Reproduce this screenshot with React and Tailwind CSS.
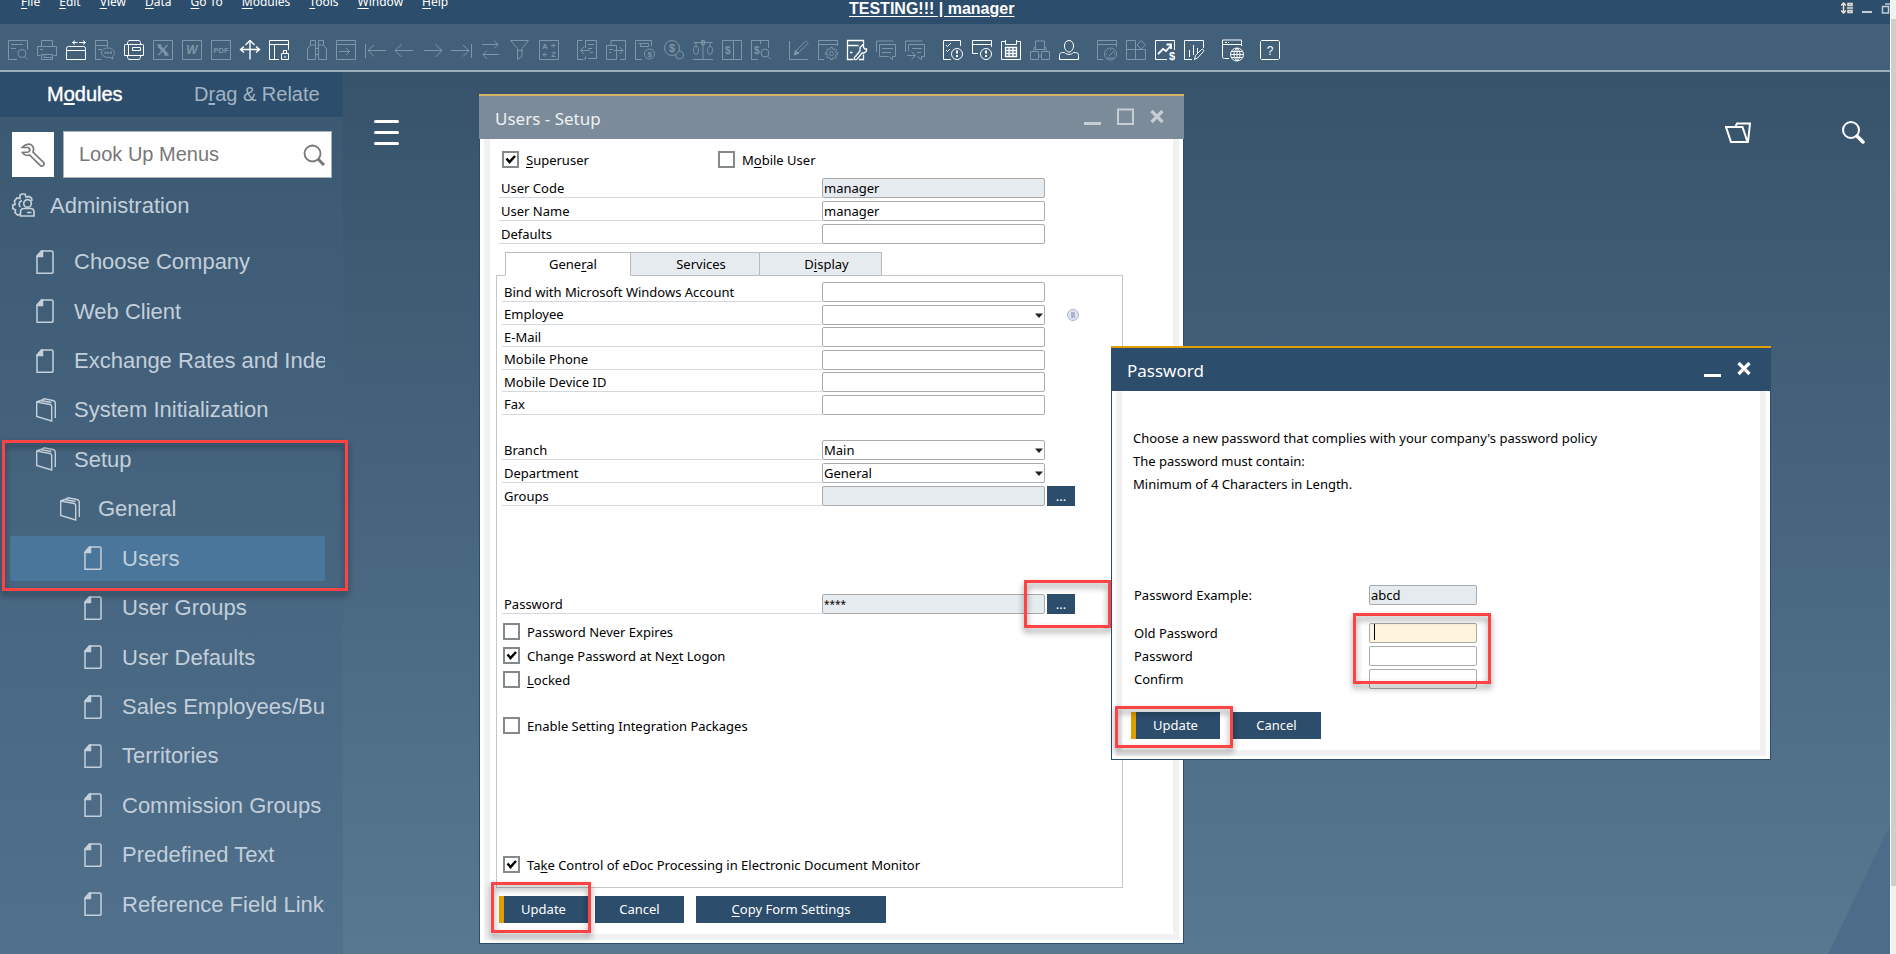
import React, { useState } from 'react'

const menus = ['_File', '_Edit', '_View', '_Data', '_Go To', '_Modules', '_Tools', '_Window', '_Help']

const tree = [
  { name: 'Choose Company', level: 1 },
  { name: 'Web Client', level: 1 },
  { name: 'Exchange Rates and Indexes', level: 1 },
  { name: 'System Initialization', level: 1, folder: true },
  { name: 'Setup', level: 1, folder: true },
  { name: 'General', level: 2, folder: true },
  { name: 'Users', level: 3 },
  { name: 'User Groups', level: 3 },
  { name: 'User Defaults', level: 3 },
  { name: 'Sales Employees/Buyers', level: 3 },
  { name: 'Territories', level: 3 },
  { name: 'Commission Groups', level: 3 },
  { name: 'Predefined Text', level: 3 },
  { name: 'Reference Field Links', level: 3 },
]

const indent = { 1: 'pl-[26px]', 2: 'pl-[50px]', 3: 'pl-[74px]' }

// the letter after "_" is the shortcut key and gets underlined
const Mnemonic = ({ text }) => {
  const i = text.indexOf('_')
  if (i < 0) return <span>{text}</span>
  return (
    <span>{text.slice(0, i)}<u className="underline-offset-2">{text[i + 1]}</u>{text.slice(i + 2)}</span>
  )
}

const letter = { stroke: 'none', fill: 'currentColor', fontFamily: 'Liberation Sans, sans-serif', fontWeight: 'bold' }

/* toolbar icons, 20x20 */
const I = {
  preview: <path d="M9 19.500H.5V.5h19v9M3 4.500h12M3 8.500h5M16.500 16.500l3 3M18 13.500a4 4 0 1 1-8 0a4 4 0 0 1 8 0" />,
  print: <path d="M4.500 6V.5h11V6M3.500 15.500H.5V6.500h19v9h-3M4.500 19.500v-5h11v5zM3 9.500h3M7 14.500v3h8" />,
  resize: <path d="M.5 8.500a2 2 0 0 1 2-2h15a2 2 0 0 1 2 2v11H.5zM.5 10.500h19M6.500 2.500h5M9 .5l-2.500 2L9 4.500M13 2.500h6M17 .5l2.500 2l-2.500 2" />,
  sms: <><path d="M12.500 7V.5H.5v19h6M.5 5.500h12M3 9.500h4" /><path d="M13 8c3.600 0 6.500 2 6.500 4.800c0 1.500-.8 2.700-2 3.500l.5 2.700l-3-1.700c-4.700.6-8.500-1.500-8.500-4.500C6.500 10 9.400 8 13 8z" /><path d="M9.500 12.800h2M12.200 12.800h2M15 12.800h2" strokeWidth="2" /></>,
  fax: <path d="M3.500 4C3.500 1.500 4 .5 6 .5h8c2 0 2.500 1 2.500 3.500M3.500 16c0 2.500.5 3.500 2.500 3.500h8c2 0 2.500-1 2.500-3.500M1.500 4.500h17c1 0 1 0 1 1v10h-19v-10c0-1 0-1 1-1zM4.500 4.500v11M8.500 7.500h8v3h-8z" />,
  excel: <><path d="M.5.5h19v19H.5z" /><path d="M5.500 5.500L14 14.500" strokeWidth="3" /><path d="M14.500 5L5.500 15M4.500 5h4M11.500 15h4" strokeWidth="1.300" /></>,
  word: <><path d="M.5.5h19v19H.5z" /><text x="10" y="14" fontSize="12" textAnchor="middle" fontStyle="italic" style={letter}>W</text></>,
  pdf: <><path d="M.5.5h19v19H.5z" /><text x="10" y="12.500" fontSize="7.500" textAnchor="middle" style={letter}>PDF</text></>,
  move: <path d="M10 1v18.500M1 9.500h18M10 .5L5.500 5M10 .5L14.500 5M4 6.500l-3.500 3l3.500 3M16 6.500l3.500 3l-3.500 3" strokeWidth="1.400" />,
  lock: <path d="M10 19.500H.5V.5h19V10M.5 4.500h19M5.500 4.500v15M12.500 13.500h7v6h-7zM14.500 13v-2.500h3V13M16 16v2" />,
  find: <path d="M3.500 5V.5h5V5M11.500 5V.5h5V5M.5 19.500V9l3-4h5v14.500zM19.500 19.500V9l-3-4h-5v14.500zM8.500 8.500h3M8.500 14.500h3" />,
  add: <path d="M.5.5h19v19H.5zM.5 4.500h19M3 11.500h10M10 8l3.500 3.500L10 15" />,
  first: <path d="M.5 4v14M3 10.500h18M9 5l-6 5.500l6 6" />,
  prev: <path d="M1 10.500h18M7.500 4.500l-6.500 6l6.500 6.500" />,
  next: <path d="M1 10.500h18M12.500 4.500l6.500 6l-6.500 6.500" />,
  last: <path d="M19.500 4v14M-1 10.500h18M11 5l6 5.500l-6 6" />,
  refresh: <path d="M1 4.500h16M13 .5l4 4l-4 4M18 14.500H2M6 10.500l-4 4l4 4.500" />,
  filter: <path d="M.5.5h18L12 8.500v8l-4.500 3v-11zM8 10.500h4" />,
  sort: <><path d="M.5.500h19v19H.5zM12 5.500h4M14 3.500l2 2l-2 2M8 14.500H4M6 12.500l-2 2l2 2" /><text x="3" y="8.500" fontSize="8" style={letter}>A</text><text x="12" y="17" fontSize="8" style={letter}>Z</text></>,
  base: <path d="M6 19.500H.5V.5h5M8.500 16.500V19h-2M8.500 8V.5h11v18h-8M11 4.500h6M11 8.500h4M4 10.500h9M7 7l-3.500 3.500L7 14M13 12.500h3" />,
  target: <path d="M5 5V.5h14.500v19H14M.5 5.500h10v14H.5zM3 9.500h4M3 12.500h2M8 10.500h9M13.500 7l3.500 3.500l-3.500 3.500" />,
  gross: <><path d="M7 19.500H.5V.5h16V6M3.500 3.500h10v3h-8v-3M19.500 14a5 5 0 1 1-10 0a5 5 0 0 1 10 0" /><text x="12.500" y="17" fontSize="8" style={letter}>$</text></>,
  pay: <><path d="M15.500 8a7.500 7.500 0 1 1-15 0a7.500 7.500 0 0 1 15 0M19.500 15a4 4 0 1 1-8 0M15 11c3 0 4.500 2 4.500 4" /><text x="5" y="12" fontSize="11" style={letter}>$</text></>,
  scale: <path d="M10 1v18M.5 2.500h19M0 19.500h20M3 2.500v4M17 2.500v4M.5 9.500c0-2 1-3 2.500-3s2.500 1 2.500 3c0 3-1 5-2.500 5s-2.500-2-2.500-5M14.500 9.500c0-2 1-3 2.500-3s2.500 1 2.500 3c0 3-1 5-2.500 5s-2.500-2-2.500-5M8.500.5h3v4h-3z" />,
  journal: <><path d="M.5.5h19v19H.5zM11.500.5v19" /><text x="3" y="14" fontSize="10" style={letter}>$</text></>,
  audit: <><path d="M7 19.500H.5V.5h17V8M9.500.5V4M18 13a4 4 0 1 1-8 0a4 4 0 0 1 8 0M17 16.500l3 3" /><text x="3" y="14" fontSize="10" style={letter}>$</text></>,
  edit: <><path d="M.5 1v18.500H19M7 11l9-9.500c1-1 4 1 2.500 2.500l-10 9.500" /><path d="M5 15l1.500-4.500l3 3z" fill="currentColor" /></>,
  gear: <path d="M6 19.500H.5V.5h19V6M.5 4.500h19M15.500 13.500a2 2 0 1 1-4 0a2 2 0 0 1 4 0M12.500 9V7.500h2V9l1.500.7l1.200-1l1.300 1.300l-1 1.300l.6 1.400h1.400v2h-1.500l-.6 1.300l1 1.200l-1.400 1.300l-1.200-1l-1.300.6v1.400h-2v-1.500l-1.300-.6l-1.200 1l-1.300-1.400l1-1.200l-.6-1.300H7.500v-2H9l.6-1.300l-1-1.300L10 8.700l1.200 1z" />,
  tool: <path d="M6.500 19.500H.5V.5h16V3M.5 5.500h11M3 12.500h2.500M8.500 16.500L13 11V7.500L16.500 4v3.500l1.500 1.500h1.500v2L17 13h-2l-4.500 5.500c-.5 1-2.500 1.500-3 .5c-.5-1 0-2 1-2.500zM16.500 14.500v5H12" strokeWidth="1.300" />,
  chat: <path d="M1 11.500H.5V1h17M3.500 4.500h16v12h-3v3l-4-3h-9zM6 8.500h11M6 12.500h9" />,
  chat2: <path d="M.5 12V1h17M3.500 11V4.500h16v12h-3v3l-4-3M7 8.500h10M12 12.500h4M2 15.500h8M6.500 11.500l4 4l-4 4" />,
  tasks: <><path d="M8 19.500H.5V.5h17V6M3 5l1.500 1.500L8 3M3 10l1.500 1.500L7 9M19.500 14a5.500 5.500 0 1 1-11 0a5.500 5.500 0 0 1 11 0" /><path d="M14 10.500v3M14 15v2" strokeWidth="2" /></>,
  alert: <><path d="M6 13.500H.5V.5h19V7M.5 4.500h19M19.500 14a5.500 5.500 0 1 1-11 0a5.500 5.500 0 0 1 11 0" /><path d="M14 10.500v3M14 15v2" strokeWidth="2" /></>,
  calendar: <><path d="M.5 1.500h4v3h11v-3h4v18H.5zM4.500 0v4M15.500 0v4" /><path d="M4.500 7.500h11v9h-11zM4.500 10.500h11M4.500 13.500h11M8 7.500v9M12 7.500v9" strokeWidth="1.300" /></>,
  org: <path d="M5.500 1h9v8.500h-9zM.5 11.500h8v8h-8zM11.500 11.500h8v8h-8zM8.500 16h3M4 7.500h1.500M14.500 7.500H16M4 7.500v4M16 7.500v4" />,
  person: <path d="M14.500 6c0 3-2 6-4.500 6S5.500 9 5.500 6S7 .5 10 .5s4.500 2.500 4.500 5.500M.5 19.500v-4c0-2 1-3 3-3h2c2 2.500 7 2.500 9 0h2c2 0 3 1 3 3v4z" />,
  gauge: <path d="M6 19.500H.5V.5h19V7M.5 4.500h19M19.500 14a6 6 0 1 1-12 0a6 6 0 0 1 12 0M12 16l5-5M9 14h1M13.500 9.500v1M17 14h1M10 18h7" />,
  widgets: <path d="M.5.5h9v19h-9zM.5 9.500h19v10h-10M9.500 9.500v10M15 .5l4.500 4.500l-4.500 4l-4-4z" />,
  profit: <><path d="M12 19.500H.5V.5h19V10" /><path d="M3 14l5-5l3 2l5-5.500M11.500 4.500H16v4.500" strokeWidth="1.800" /><text x="14" y="19.500" fontSize="11" style={letter}>$</text></>,
  chart: <path d="M8 19.500H.5V.5h19V8M5.500 10v7M9.500 5v10M13.500 8v5M10.500 19.500l1-4l6-6c1-1 3 .5 2 2l-6 6.500z" />,
  web: <path d="M7 18.500H2.500C1 18.500.5 18 .5 16.500V0h19v6M.5 4.500h19M3 2.500h2M6 2.500h1M21.500 14.500a6.500 6.500 0 1 1-13 0a6.500 6.500 0 0 1 13 0M15 8v13M8.500 14.500h13M9.500 11.500h11M9.500 17.500h11M15 8c-4 3-4 10 0 13M15 8c4 3 4 10 0 13" />,
  help: <><path d="M1.500.5h17l1 1v17l-1 1h-17l-1-1v-17z" /><text x="10" y="14.500" fontSize="12" textAnchor="middle" style={{ ...letter, fontWeight: 'normal' }}>?</text></>,
}

const on = ['resize', 'fax', 'move', 'lock', 'tool', 'tasks', 'alert', 'calendar', 'person', 'profit', 'chart', 'web', 'help']

const toolGroups = [
  ['preview', 'print', 'resize', 'sms', 'fax', 'excel', 'word', 'pdf', 'move', 'lock'],
  ['find', 'add', 'first', 'prev', 'next', 'last', 'refresh', 'filter', 'sort'],
  ['base', 'target', 'gross', 'pay', 'scale', 'journal', 'audit'],
  ['edit', 'gear', 'tool', 'chat', 'chat2'],
  ['tasks', 'alert', 'calendar', 'org', 'person'],
  ['gauge', 'widgets', 'profit', 'chart'],
  ['web'],
  ['help'],
]

const DocIcon = () => (
  <svg className="w-[18px] h-6 shrink-0" viewBox="0 0 18 24" fill="none" stroke="currentColor" strokeWidth="1.500">
    <path d="M5.500 1H16l1 1v20.500l-1 .7H1V6z" />
    <path d="M6.500 1v5.500H1L5.500 1z" fill="currentColor" />
  </svg>
)

const FolderIcon = () => (
  <svg className="w-5 h-6 shrink-0" viewBox="0 0 20 24" fill="none" stroke="currentColor" strokeWidth="1.400">
    <path d="M.7 4l13.500 2.500c1 .2 1.500 1 1.500 2V23L.7 18.500zM.7 4L4.500 2.500M5 2.500L8 .8l9 1.700c2 .4 2.300 1 2.300 3V20M4.500 2.500l11 2" />
  </svg>
)

const Header = () => (
  <header className="flex h-6 shrink-0 overflow-hidden bg-[#2c4d6b] text-white">
    <nav className="-mt-2 flex w-[849px] shrink-0 gap-[19px] pl-[21px] font-['Noto_Sans',sans-serif] text-[12px] leading-5">
      {menus.map((m) => (
        <button key={m} className="h-5"><Mnemonic text={m} /></button>
      ))}
    </nav>
    <h1 className="text-[16px] font-bold leading-[17px] underline underline-offset-2">TESTING!!! | manager</h1>
    <svg className="ml-auto mt-[2px] w-[49px] h-3 shrink-0" viewBox="0 0 49 12" fill="none" stroke="#c3cdd6" strokeWidth="1.500">
      <path d="M2.500 1v10M0 3.500L2.500 1L5 3.500M0 8.500L2.500 11L5 8.500M7 1.500h4v2H7zM6 6h6M7 8.500h4v2H7z" stroke="#e8e4d8" />
      <path d="M21 10h10" strokeWidth="2" />
      <path d="M41.500 4.500h6v6.500h-6zM44 2h6" />
    </svg>
  </header>
)

const Toolbar = () => (
  <div className="flex h-[48px] shrink-0 items-center gap-[18px] border-b-2 border-[#9aadbb] bg-[#42607a] pl-2 pt-[10px] pb-[4px]">
    {toolGroups.map((g, i) => (
      <div key={i} className="flex gap-[9px]">
        {g.map((name) => (
          <button key={name} aria-label={name} className={on.includes(name) ? 'text-white' : 'text-[#7f95a8]'}>
            <svg className="w-5 h-5 block overflow-visible" viewBox="0 0 20 20" fill="none" stroke="currentColor" strokeWidth="1">{I[name]}</svg>
          </button>
        ))}
      </div>
    ))}
  </div>
)

const Sidebar = () => (
  <aside className="w-[343px] shrink-0 bg-linear-to-b from-[#3b5871] to-[#50708c]">
    <div className="flex h-[45px] items-center bg-[#2c4d6b] pl-[47px] pb-[2px] text-[20px]">
      <button className="w-[147px] text-left text-white [-webkit-text-stroke:0.4px_white]"><Mnemonic text="M_odules" /></button>
      <button className="text-[#a3b3c3]"><Mnemonic text="D_rag & Relate" /></button>
    </div>
    <div className="flex items-center gap-[9px] pl-3 pr-[11px] pt-[14px]">
      <button aria-label="Settings" className="flex h-[45px] w-[42px] items-center justify-center bg-white">
        <svg className="w-6 h-6" viewBox="0 0 24 24" fill="none" stroke="#777" strokeWidth="1.700">
          <path d="M1 4.500C4 1 9 0 11.500 3c1.300 1.800 1.300 4 .5 6L23 20c.8 1.500-1.500 4-3 3L8.500 12C6 13 3 12 1.500 9.500l6-.5L9 7L7.500 4.500z" />
        </svg>
      </button>
      <label className="flex h-[47px] flex-1 items-center border border-[#a9b3bc] bg-white pl-[15px] pr-[6px]">
        <input aria-label="Look Up Menus" placeholder="Look Up Menus" className="w-0 flex-1 pb-[2px] text-[20px] outline-none placeholder:text-[#777]" />
        <svg className="w-[22px] h-[22px]" viewBox="0 0 22 22" fill="none" stroke="#777">
          <circle cx="9.500" cy="9.500" r="8" strokeWidth="1.800" />
          <path d="M15 15l6 6" strokeWidth="3" />
        </svg>
      </label>
    </div>
    <button className="mt-2 flex h-[38px] items-center gap-[15px] pl-3 text-[22px] text-[#c3cfda]">
      <svg className="w-[23px] h-6" viewBox="0 0 23 24" fill="none" stroke="currentColor" strokeWidth="1.700">
        <path d="M8 21.500l-2.500.5L3 19.500L3.500 17l-2.700-1.500v-3.500L3 11.500L2.500 8L5 5l3 .5V2l2-1h3l1 3l3-.5l2.500 1.500L20 8M8.500 14C6 12 7 8.500 10 7.500" />
        <circle cx="15.500" cy="10.500" r="3.800" />
        <path d="M8.500 23v-4c0-2 1.500-3.500 3.500-3.500h6.500c2 0 3.500 1.500 3.500 3.500v4zM15 19.500h4.500" />
      </svg>
      Administration
    </button>
    <ul className="ml-[10px] mr-[18px] mt-[13px] grid h-[692px] auto-rows-fr grid-cols-1 items-center text-[22px] text-[#c3cfda]">
      {tree.map((t) => (
        <li key={t.name}>
          <button className={`flex h-[45px] w-full items-center overflow-hidden whitespace-nowrap rounded-xs text-left ${indent[t.level]} ${t.name == 'Users' ? 'bg-[#4b769b]' : ''}`}>
            <span className="w-[38px] shrink-0">{t.folder ? <FolderIcon /> : <DocIcon />}</span>
            {t.name}
          </button>
        </li>
      ))}
    </ul>
  </aside>
)

const Check = ({ text, checked }) => {
  const [v, setv] = useState(!!checked)
  return (
    <label className="flex h-[17px] items-center gap-[7px]">
      <span className="relative h-[17px] w-[17px]">
        <input type="checkbox" checked={v} onChange={() => setv(!v)} className="peer block h-[17px] w-[17px] appearance-none border-2 border-[#84898c] bg-white" />
        <svg className="absolute left-[3px] top-[3px] hidden h-[11px] w-[11px] peer-checked:block" viewBox="0 0 11 11" fill="none" stroke="#000" strokeWidth="2.500">
          <path d="M1.500 4.500L4.500 8L10 2" />
        </svg>
      </span>
      <Mnemonic text={text} />
    </label>
  )
}

const box = 'h-5 w-full rounded-[2px] border border-[#a8abae] pl-px outline-none'

const Field = ({ id, label, value = '', grey, small, options, children }) => (
  <div className="grid h-5 grid-cols-[1fr_223px_77px]">
    <label htmlFor={id} className="flex items-center border-b border-[#d3d8dd] pl-[2px]">{label}</label>
    {options ? (
      <span className="relative">
        <select id={id} defaultValue={value} className={`${box} block appearance-none bg-white`}>
          {options.map((o) => <option key={o}>{o}</option>)}
        </select>
        <svg className="pointer-events-none absolute right-[2px] top-2 h-[5px] w-2" viewBox="0 0 8 5"><path d="M0 .5h8L4 5z" fill="#222" /></svg>
      </span>
    ) : (
      <input id={id} defaultValue={value} readOnly={grey} className={`${box} ${grey ? 'bg-[#e6ebef]' : 'bg-white'} ${small ? 'text-[10px]' : ''}`} />
    )}
    <span className="flex items-center">{children}</span>
  </div>
)

const Dots = ({ label }) => (
  <button aria-label={label} className="ml-[2px] h-5 w-7 bg-[#2c4d6b] text-white leading-4">...</button>
)

const Btn = ({ text, primary, className = 'w-[89px]' }) => (
  <button className={`h-[27px] bg-[#2c4d6b] pb-[2px] text-white ${primary ? 'border-l-[5px] border-[#e09f00] pr-[5px]' : ''} ${className}`}>
    <Mnemonic text={text} />
  </button>
)

const Window = ({ title, active, max, className, children }) => (
  <section className={`absolute flex flex-col border-t-2 font-['Noto_Sans',sans-serif] text-[13px] leading-4 text-black ${active ? 'border-[#e09f00]' : 'border-[#d9b364]'} ${className}`}>
    <div className={`flex h-[43px] shrink-0 items-center pb-[2px] pl-4 ${active ? 'bg-[#2c4d6b] pr-5 text-white' : 'bg-[#7c8b99] pr-5 text-[#eef1f4]'}`}>
      <h2 className="flex-1 pt-1 text-[17px]">{title}</h2>
      <div className={`flex gap-4 ${active ? 'text-white' : 'text-[#c6cdd3]'}`}>
        <button aria-label="Minimize"><svg className="block h-[17px] w-[17px]" viewBox="0 0 17 17"><path d="M0 14h17v3H0z" fill="currentColor" /></svg></button>
        {max && <button aria-label="Maximize"><svg className="block h-[17px] w-[17px]" viewBox="0 0 17 17"><path d="M1 1.500h15v14.500H1z" fill="none" stroke="currentColor" strokeWidth="2" /></svg></button>}
        <button aria-label="Close"><svg className="block h-[17px] w-[14px]" viewBox="0 0 14 17"><path d="M1.500 3L12.500 14M12.500 3L1.500 14" stroke="currentColor" strokeWidth="3.200" /></svg></button>
      </div>
    </div>
    <div className="flex flex-1 border border-t-0 border-[#2c4d6b] bg-white px-1 pb-[3px]">
      <div className="flex-1 border-[6px] border-t-0 border-[#f1f1f1]">{children}</div>
    </div>
  </section>
)

const UsersSetup = () => {
  const [tab, settab] = useState('Gene_ral')
  return (
    <Window title="Users - Setup" max className="left-[479px] top-[22px] h-[850px] w-[705px]">
      <div className="pl-[9px] pr-[51px] pt-3">
        <div className="flex pl-[3px]">
          <div className="w-[216px]"><Check text="_Superuser" checked /></div>
          <Check text="M_obile User" />
        </div>
        <div className="mt-[10px] flex flex-col gap-[3px]">
          <Field id="code" label="User Code" value="manager" grey />
          <Field id="name" label="User Name" value="manager" />
          <Field id="defaults" label="Defaults" />
        </div>
      </div>
      <div role="tablist" className="ml-[15px] mt-2 flex">
        {[['Gene_ral', 'w-[126px] pl-[10px]'], ['Services', 'w-[129px] pl-3'], ['D_isplay', 'w-[122px] pl-3']].map(([t, w]) => (
          <button key={t} role="tab" onClick={() => settab(t)} className={`relative -mb-px h-6 border border-[#b9bdc1] not-first:border-l-0 ${w} ${tab == t ? 'border-b-white bg-white' : 'bg-[#e6ebef]'}`}>
            <Mnemonic text={t} />
          </button>
        ))}
      </div>
      <div className="ml-[6px] mr-[50px] h-[613px] border border-[#c3c7ca] pl-[5px] pt-[6px]">
        <div className="flex h-[133px] flex-col justify-between">
          <Field id="bind" label="Bind with Microsoft Windows Account" />
          <Field id="employee" label="Employee" options={['']}>
            <svg className="ml-[22px] h-3 w-3" viewBox="0 0 12 12">
              <circle cx="6" cy="6" r="5.500" fill="#dfe5f0" stroke="#a9b3c9" />
              <path d="M4 4h4M4 6h4M4 8h4" stroke="#7d88a5" />
            </svg>
          </Field>
          <Field id="email" label="E-Mail" />
          <Field id="phone" label="Mobile Phone" />
          <Field id="device" label="Mobile Device ID" />
          <Field id="fax" label="Fax" />
        </div>
        <div className="mt-[25px] flex flex-col gap-[3px]">
          <Field id="branch" label="Branch" value="Main" options={['Main']} />
          <Field id="dept" label="Department" value="General" options={['General']} />
          <Field id="groups" label="Groups" grey><Dots label="Choose groups" /></Field>
        </div>
        <div className="mt-[88px]">
          <Field id="pw" label="Password" value="****" grey small><Dots label="Change password" /></Field>
        </div>
        <div className="mt-[9px] flex flex-col gap-[7px] pl-[1px]">
          <Check text="Password Never Expires" />
          <Check text="Change Password at Ne_xt Logon" checked />
          <Check text="_Locked" />
        </div>
        <div className="mt-[29px] pl-[1px]"><Check text="Enable Setting Integration Packages" /></div>
        <div className="mt-[122px] pl-[1px]"><Check text="Ta_ke Control of eDoc Processing in Electronic Document Monitor" checked /></div>
      </div>
      <div className="mt-2 flex gap-[7px] pl-[9px]">
        <Btn text="Update" primary />
        <Btn text="Cancel" />
        <Btn text="_Copy Form Settings" className="ml-[5px] w-[190px]" />
      </div>
    </Window>
  )
}

const PwField = ({ id, label, value = '', bg = 'bg-white', children }) => (
  <div className="flex h-5 items-center">
    <label htmlFor={id} className="w-[235px]">{label}</label>
    <span className="relative">
      <input id={id} defaultValue={value} className={`block h-5 w-[108px] rounded-[2px] border border-[#a8abae] pl-[1px] outline-none ${bg}`} />
      {children}
    </span>
  </div>
)

const PasswordDialog = () => (
  <Window title="Password" active className="left-[1111px] top-[274px] h-[414px] w-[660px]">
    <div className="pl-[11px] pt-9">
      <p className="leading-[23px]">Choose a new password that complies with your company's password policy</p>
      <p className="leading-[23px]">The password must contain:</p>
      <p className="leading-[23px]">Minimum of 4 Characters in Length.</p>
      <div className="mt-[89px] flex flex-col gap-[3px] pl-[1px]">
        <PwField id="example" label="Password Example:" value="abcd" bg="bg-[#e6ebef]" />
        <div className="h-3"></div>
        <PwField id="old" label="Old Password" bg="bg-[#fff4dc]">
          <span className="absolute left-[5px] top-[1px] h-4 w-px bg-black"></span>
        </PwField>
        <PwField id="new" label="Password" />
        <PwField id="confirm" label="Confirm" />
      </div>
    </div>
    <div className="mt-[23px] flex gap-3 pl-[9px]">
      <Btn text="Update" primary />
      <Btn text="Cancel" />
    </div>
  </Window>
)

// red call-out frames lying over the desktop
const Frame = ({ className }) => (
  <div className={`pointer-events-none absolute border-[3px] border-[#fd4343] drop-shadow-[0_4px_3px_rgba(0,0,0,0.45)] ${className}`}></div>
)

const App = () => {
  return (
    <div className="flex h-screen overflow-hidden bg-white font-['Liberation_Sans',Arial,sans-serif]">
      <div className="flex min-w-0 flex-1 flex-col overflow-hidden">
        <Header />
        <Toolbar />
        <div className="relative flex min-h-0 flex-1 overflow-hidden bg-linear-to-b from-[#36536b] to-[#587891]">
          <Sidebar />
          <main className="flex flex-1 items-start pl-[31px] pr-[25px] pt-[47px]">
            <button aria-label="Menu">
              <svg className="h-[26px] w-[25px]" viewBox="0 0 25 26" stroke="#fff" strokeWidth="3" strokeLinecap="round"><path d="M1.500 2.500h22M1.500 13.500h22M1.500 24.500h22" /></svg>
            </button>
            <button aria-label="Open" className="ml-auto mr-[91px] mt-[3px]">
              <svg className="h-[21px] w-[26px]" viewBox="0 0 26 21" fill="none" stroke="#fff" strokeWidth="2"><path d="M1 5h16.500l5 15H6zM11 5V3.500l1-2h13L23 20" /></svg>
            </button>
            <button aria-label="Search" className="mt-[2px]">
              <svg className="h-[23px] w-[23px]" viewBox="0 0 23 23" fill="none" stroke="#fff"><circle cx="9" cy="9" r="8" strokeWidth="2" /><path d="M15 15l6 6" strokeWidth="3.500" strokeLinecap="round" /></svg>
            </button>
          </main>
          <svg className="absolute bottom-0 right-0 h-[129px] w-[62px]" viewBox="0 0 62 129"><path d="M62 0v129H0z" fill="#4c6c89" /></svg>
          <UsersSetup />
          <Frame className="left-[1024px] top-[508px] h-[48px] w-[87px]" />
          <PasswordDialog />
          <Frame className="left-[2px] top-[368px] h-[151px] w-[346px]" />
          <Frame className="left-[491px] top-[810px] h-[51px] w-[100px]" />
          <Frame className="left-[1353px] top-[541px] h-[71px] w-[138px]" />
          <Frame className="left-[1115px] top-[634px] h-[42px] w-[118px]" />
        </div>
      </div>
      <div className="ml-px w-[5px] shrink-0 bg-[#f0f0f0] pb-[68px] pt-[19px]">
        <div className="h-full bg-[#cdcdcd]"></div>
      </div>
    </div>
  )
}

export default App
